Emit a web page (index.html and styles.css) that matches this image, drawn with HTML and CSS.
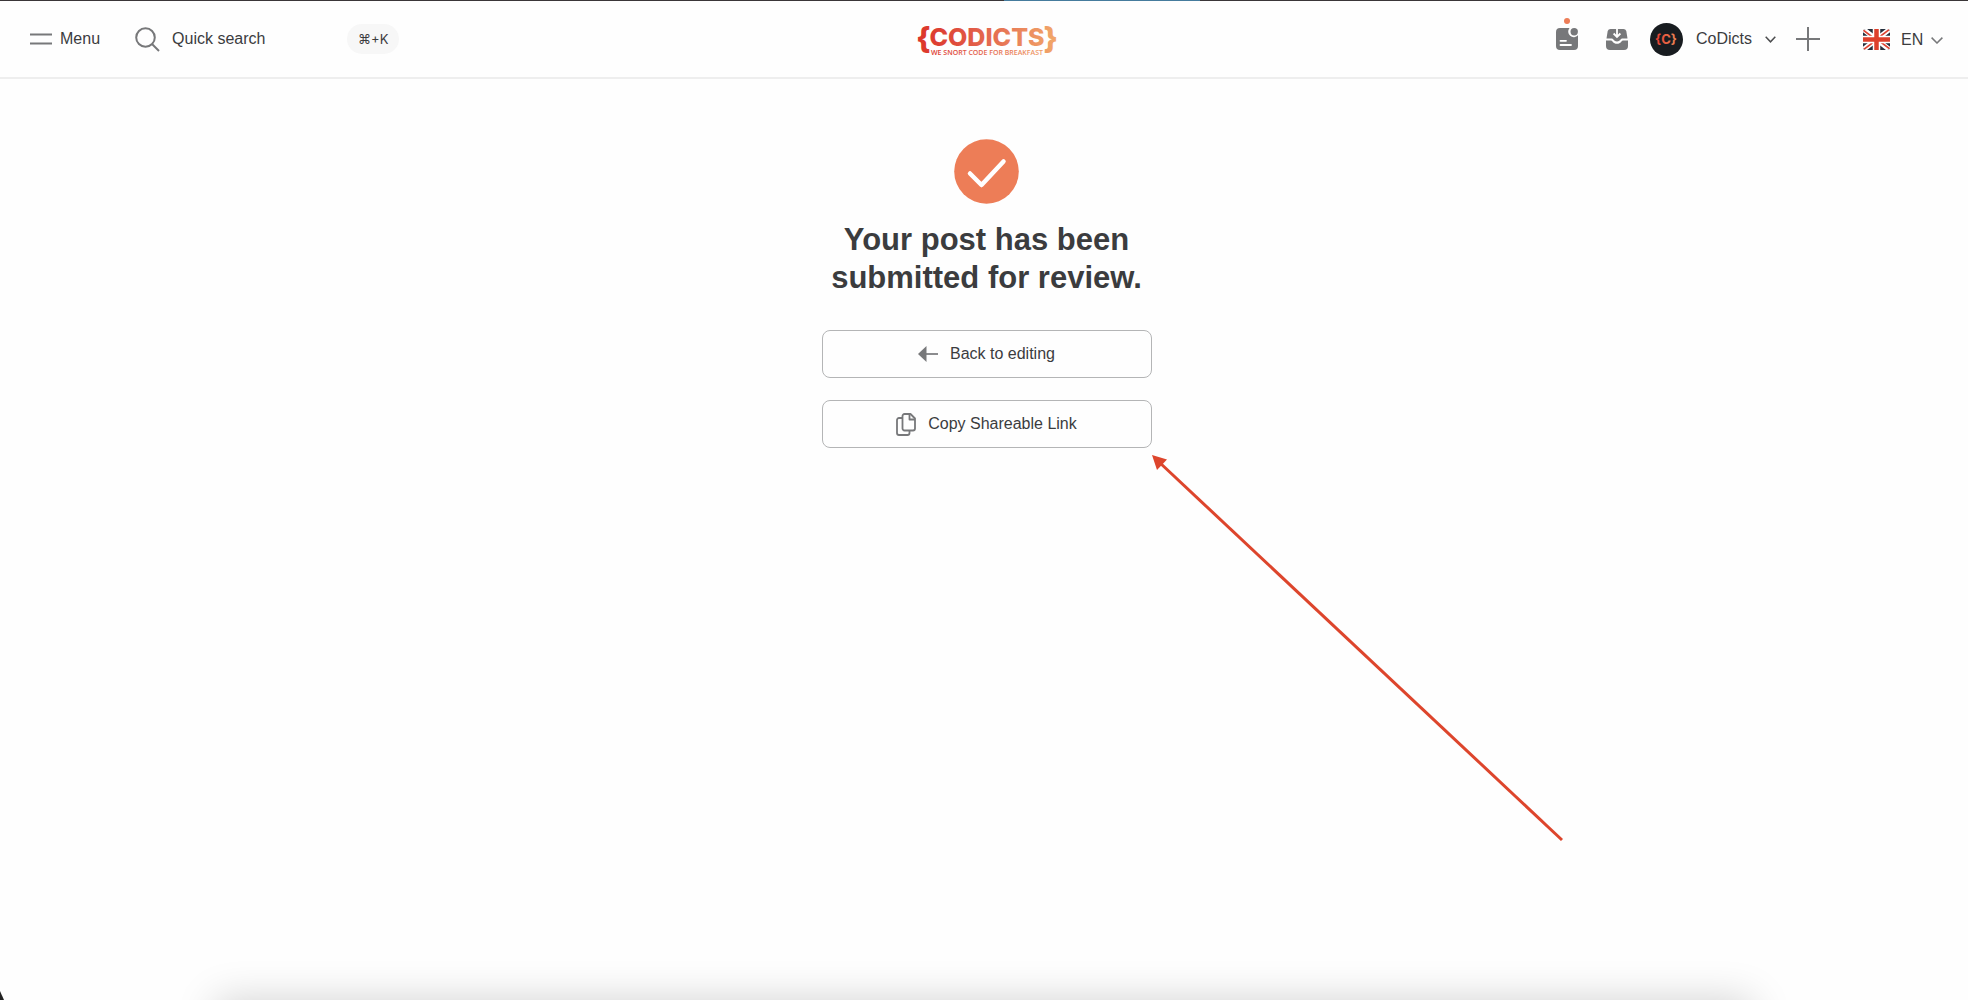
FILE: index.html
```html
<!DOCTYPE html>
<html lang="en">
<head>
	<meta charset="UTF-8">
	<meta name="viewport" content="width=device-width, initial-scale=1">
	<title>CoDicts</title>
	<link rel="stylesheet" href="styles.css">
</head>
<body>
	<div class="loading"><div class="loadingBar"></div></div>

	<header class="header">
		<div class="headerLeft">
			<button type="button" class="btnMenu">
				<svg width="22" height="12" viewBox="0 0 22 12" fill="none" stroke="#77787a" stroke-width="2"><path d="M0 1.5h22M0 10.5h22"/></svg>
				Menu
			</button>
			<div class="search">
				<label for="txtSearch" aria-label="Quick search">
					<svg width="25" height="25" viewBox="0 0 25 25" fill="none" stroke="#77787a" stroke-width="2"><circle cx="10.500" cy="10.500" r="9.300"/><path d="M17 17l7 7"/></svg>
				</label>
				<input type="text" id="txtSearch" placeholder="Quick search">
				<span class="shortcut">⌘+K</span>
			</div>
		</div>

		<a href="#" class="logo" aria-label="CoDicts">
			<svg width="144" height="38" viewBox="0 0 144 38">
				<defs>
					<linearGradient id="logoFill" gradientUnits="userSpaceOnUse" x1="0" y1="0" x2="144" y2="0">
						<stop offset="0" stop-color="#dc3428"/>
						<stop offset="0.2" stop-color="#de4336"/>
						<stop offset="0.5" stop-color="#e4684f"/>
						<stop offset="1" stop-color="#f2aa6b"/>
					</linearGradient>
				</defs>
				<g fill="url(#logoFill)">
					<text class="logoBrace" x="1" y="29">{</text>
					<text class="logoName" x="72" y="26" text-anchor="middle">CODICTS</text>
					<text class="logoBrace" x="143" y="29" text-anchor="end">}</text>
					<text class="logoTag" x="72" y="35" text-anchor="middle">WE SNORT CODE FOR BREAKFAST</text>
				</g>
			</svg>
		</a>

		<div class="headerRight">
			<button type="button" class="iconButton" aria-label="Posts">
				<svg width="22" height="22" viewBox="0 0 22 22">
					<path fill="#77787a" d="M4 0h9.500a5.300 5.300 0 0 0 8.500 7.200V18a4 4 0 0 1-4 4H4a4 4 0 0 1-4-4V4a4 4 0 0 1 4-4z"/>
					<circle cx="18.200" cy="3.800" r="3.700" fill="#77787a"/>
					<path stroke="#fff" stroke-width="1.800" stroke-linecap="round" d="M4.500 12.800h5.500M4.500 17h10.500"/>
				</svg>
				<span class="badge"></span>
			</button>
			<button type="button" class="iconButton" aria-label="Inbox">
				<svg width="22" height="21" viewBox="0 0 22 21">
					<path fill="#77787a" d="M4.500 0h13a3 3 0 0 1 2.800 2L21.500 9.500H16c-1.500 0-1.800 3-5 3s-3.500-3-5-3H.5L1.700 2A3 3 0 0 1 4.500 0z"/>
					<path fill="#77787a" d="M0 11.500h5.200c1.200 0 1.800 3.300 5.800 3.300s4.600-3.300 5.800-3.300H22V17a4 4 0 0 1-4 4H4a4 4 0 0 1-4-4z"/>
					<path fill="none" stroke="#fff" stroke-width="1.800" d="M11 0v7.500M7.600 4.500L11 7.900l3.400-3.400"/>
				</svg>
			</button>
			<button type="button" class="btnAccount">
				<svg width="33" height="33" viewBox="0 0 33 33">
					<defs>
						<linearGradient id="avatarFill"><stop offset="0" stop-color="#e5392f"/><stop offset="1" stop-color="#ec8a58"/></linearGradient>
					</defs>
					<circle cx="16.500" cy="16.500" r="16.500" fill="#181c20"/>
					<text class="avatarText" x="16" y="21" text-anchor="middle" fill="url(#avatarFill)">{C}</text>
				</svg>
				CoDicts
				<svg width="11" height="7" viewBox="0 0 11 7" fill="none" stroke="#4c4d4f" stroke-width="1.500"><path d="M.7.8l4.800 5 4.800-5"/></svg>
			</button>
			<button type="button" class="iconButton btnAdd" aria-label="New post">
				<svg width="24" height="24" viewBox="0 0 24 24" stroke="#77787a" stroke-width="2"><path d="M12 0v24M0 12h24"/></svg>
			</button>
			<div class="language">
				<svg width="27" height="21" viewBox="0 0 27 21">
					<defs><clipPath id="flagClip"><rect width="27" height="21" rx="3"/></clipPath></defs>
					<g clip-path="url(#flagClip)">
						<rect width="27" height="21" fill="#252f3d"/>
						<path stroke="#fff" stroke-width="5" d="M0 0l27 21M27 0L0 21"/>
						<path stroke="#dd4534" stroke-width="1.600" d="M0 1l12 9M27 0L15 9M0 21l12-9M27 20l-12-9"/>
						<path stroke="#fff" stroke-width="7.500" d="M13.500 0v21M0 10.500h27"/>
						<path stroke="#dd3f2b" stroke-width="4.500" d="M13.500 0v21M0 10.500h27"/>
					</g>
				</svg>
				<div class="languageSelect">
					<select aria-label="Language">
						<option>EN</option>
					</select>
					<svg width="12" height="7" viewBox="0 0 12 7" fill="none" stroke="#77787a" stroke-width="1.500"><path d="M.6.6L6 6 11.400.6"/></svg>
				</div>
			</div>
		</div>
	</header>

	<main class="content">
		<svg class="check" width="65" height="65" viewBox="0 0 65 65">
			<circle cx="32.500" cy="32.500" r="32.300" fill="#ed7d57"/>
			<path fill="none" stroke="#fff" stroke-width="4.500" stroke-linecap="round" stroke-linejoin="round" d="M16 34.500L27.500 46 49.500 22.500"/>
		</svg>
		<h1>Your post has been<br>submitted for review.</h1>
		<div class="actions">
			<button type="button" class="btnAction">
				<svg width="20" height="16" viewBox="0 0 20 16"><path fill="#77787a" d="M0 8L8.500 0v16z"/><path stroke="#77787a" stroke-width="1.700" d="M8 8h12"/></svg>
				Back to editing
			</button>
			<button type="button" class="btnAction">
				<svg width="20" height="23" viewBox="0 0 20 23" fill="none" stroke="#77787a" stroke-width="1.800" stroke-linejoin="round"><path d="M8.500 1h6l4.500 4.500v10a2 2 0 0 1-2 2H8.500a2 2 0 0 1-2-2V3a2 2 0 0 1 2-2z"/><path d="M13.500 1v5.500H19M6.500 5H3a2 2 0 0 0-2 2v13a2 2 0 0 0 2 2h8.500a2 2 0 0 0 2-2v-2.500"/></svg>
				Copy Shareable Link
			</button>
			<svg class="pointer" width="412" height="388" viewBox="0 0 412 388">
				<path stroke="#dd452c" stroke-width="3" d="M7 7l403 378"/>
				<path fill="#dd452c" d="M0 0l15 4.500L5 15z"/>
			</svg>
		</div>
	</main>

	<div class="bottomShadow"></div>
	<div class="corner"></div>
</body>
</html>
```

FILE: styles.css
```css
body {
	margin: 0;
	min-height: 100vh;
	background-color: #fefefe;
	color: #3b3c3e;
	font-family: "Liberation Sans", Arial, sans-serif;
	font-size: 16px;
	overflow-x: hidden;
}
svg {
	display: block;
	flex: none;
}
button, input, select {
	margin: 0;
	padding: 0;
	border: 0;
	background: none;
	color: inherit;
	font: inherit;
}
button {
	display: flex;
	align-items: center;
	cursor: pointer;
}

/* thin bar above the header */
.loading {
	height: 1px;
	background-color: #3a3638;
}
.loadingBar {
	width: 10%;
	height: 1px;
	margin-left: 51%;
	background-color: #457b9d;
}

.header {
	display: grid;
	grid-template-columns: 1fr auto 1fr;
	align-items: center;
	height: 76px;
	padding: 0 25px 0 30px;
	border-bottom: 2px solid #eeeeee;
}
.headerLeft {
	display: flex;
	align-items: center;
	gap: 35px;
}
.btnMenu {
	gap: 8px;
}
.search {
	display: flex;
	align-items: center;
	gap: 12px;
}
.search input {
	width: 163px;
	outline: none;
}
.search input::placeholder {
	color: #3b3c3e;
	opacity: 1;
}
.shortcut {
	padding: 0 11px;
	border-radius: 15px;
	background-color: #f7f7f7;
	font-family: Inter, "DejaVu Sans", sans-serif;
	font-size: 13px;
	line-height: 30px;
}

.logoName, .logoBrace {
	font-family: Inter, sans-serif;
	font-weight: 800;
	font-size: 25px;
}
.logoBrace {
	font-size: 30px;
}
.logoTag {
	font-family: "Open Sans", sans-serif;
	font-weight: 600;
	font-size: 7px;
}

.headerRight {
	display: flex;
	align-items: center;
	justify-content: flex-end;
}
.iconButton {
	position: relative;
	margin-right: 28px;
}
.badge {
	position: absolute;
	top: -10px;
	left: 8px;
	width: 6px;
	height: 6px;
	border-radius: 50%;
	background-color: #ed7d57;
}
.iconButton + .btnAccount {
	margin-left: -6px;
}
.btnAccount {
	gap: 13px;
	margin-right: 20px;
}
.avatarText {
	font-family: Inter, sans-serif;
	font-weight: 700;
	font-size: 13px;
}
.btnAdd {
	margin-right: 43px;
}
.language {
	display: flex;
	align-items: center;
	gap: 11px;
}
.languageSelect {
	position: relative;
}
.languageSelect select {
	display: block;
	width: 42px;
	appearance: none;
	cursor: pointer;
}
.languageSelect svg {
	position: absolute;
	top: 6px;
	right: 0;
	pointer-events: none;
}

.content {
	display: flex;
	flex-direction: column;
	align-items: center;
	padding: 60px 25px 0 30px;
}
h1 {
	margin: 17px 0 33px;
	font-size: 31px;
	line-height: 38px;
	text-align: center;
}
.actions {
	position: relative;
	display: flex;
	flex-direction: column;
	gap: 22px;
	width: 330px;
	max-width: 100%;
}
.btnAction {
	justify-content: center;
	gap: 12px;
	height: 48px;
	border: 1px solid #b4b5b6;
	border-radius: 8px;
}
.pointer {
	position: absolute;
	top: 100%;
	left: 100%;
	margin-top: 7px;
}

/* soft shadow along the lower edge of the window */
.bottomShadow {
	position: fixed;
	top: 100%;
	left: 11%;
	right: 11%;
	height: 60px;
	box-shadow: 0 0 40px rgba(0, 0, 0, 0.18);
}
.corner {
	position: fixed;
	bottom: 0;
	left: 0;
	width: 4px;
	height: 9px;
	background-color: #222222;
	clip-path: polygon(0 0, 100% 100%, 0 100%);
}
```
